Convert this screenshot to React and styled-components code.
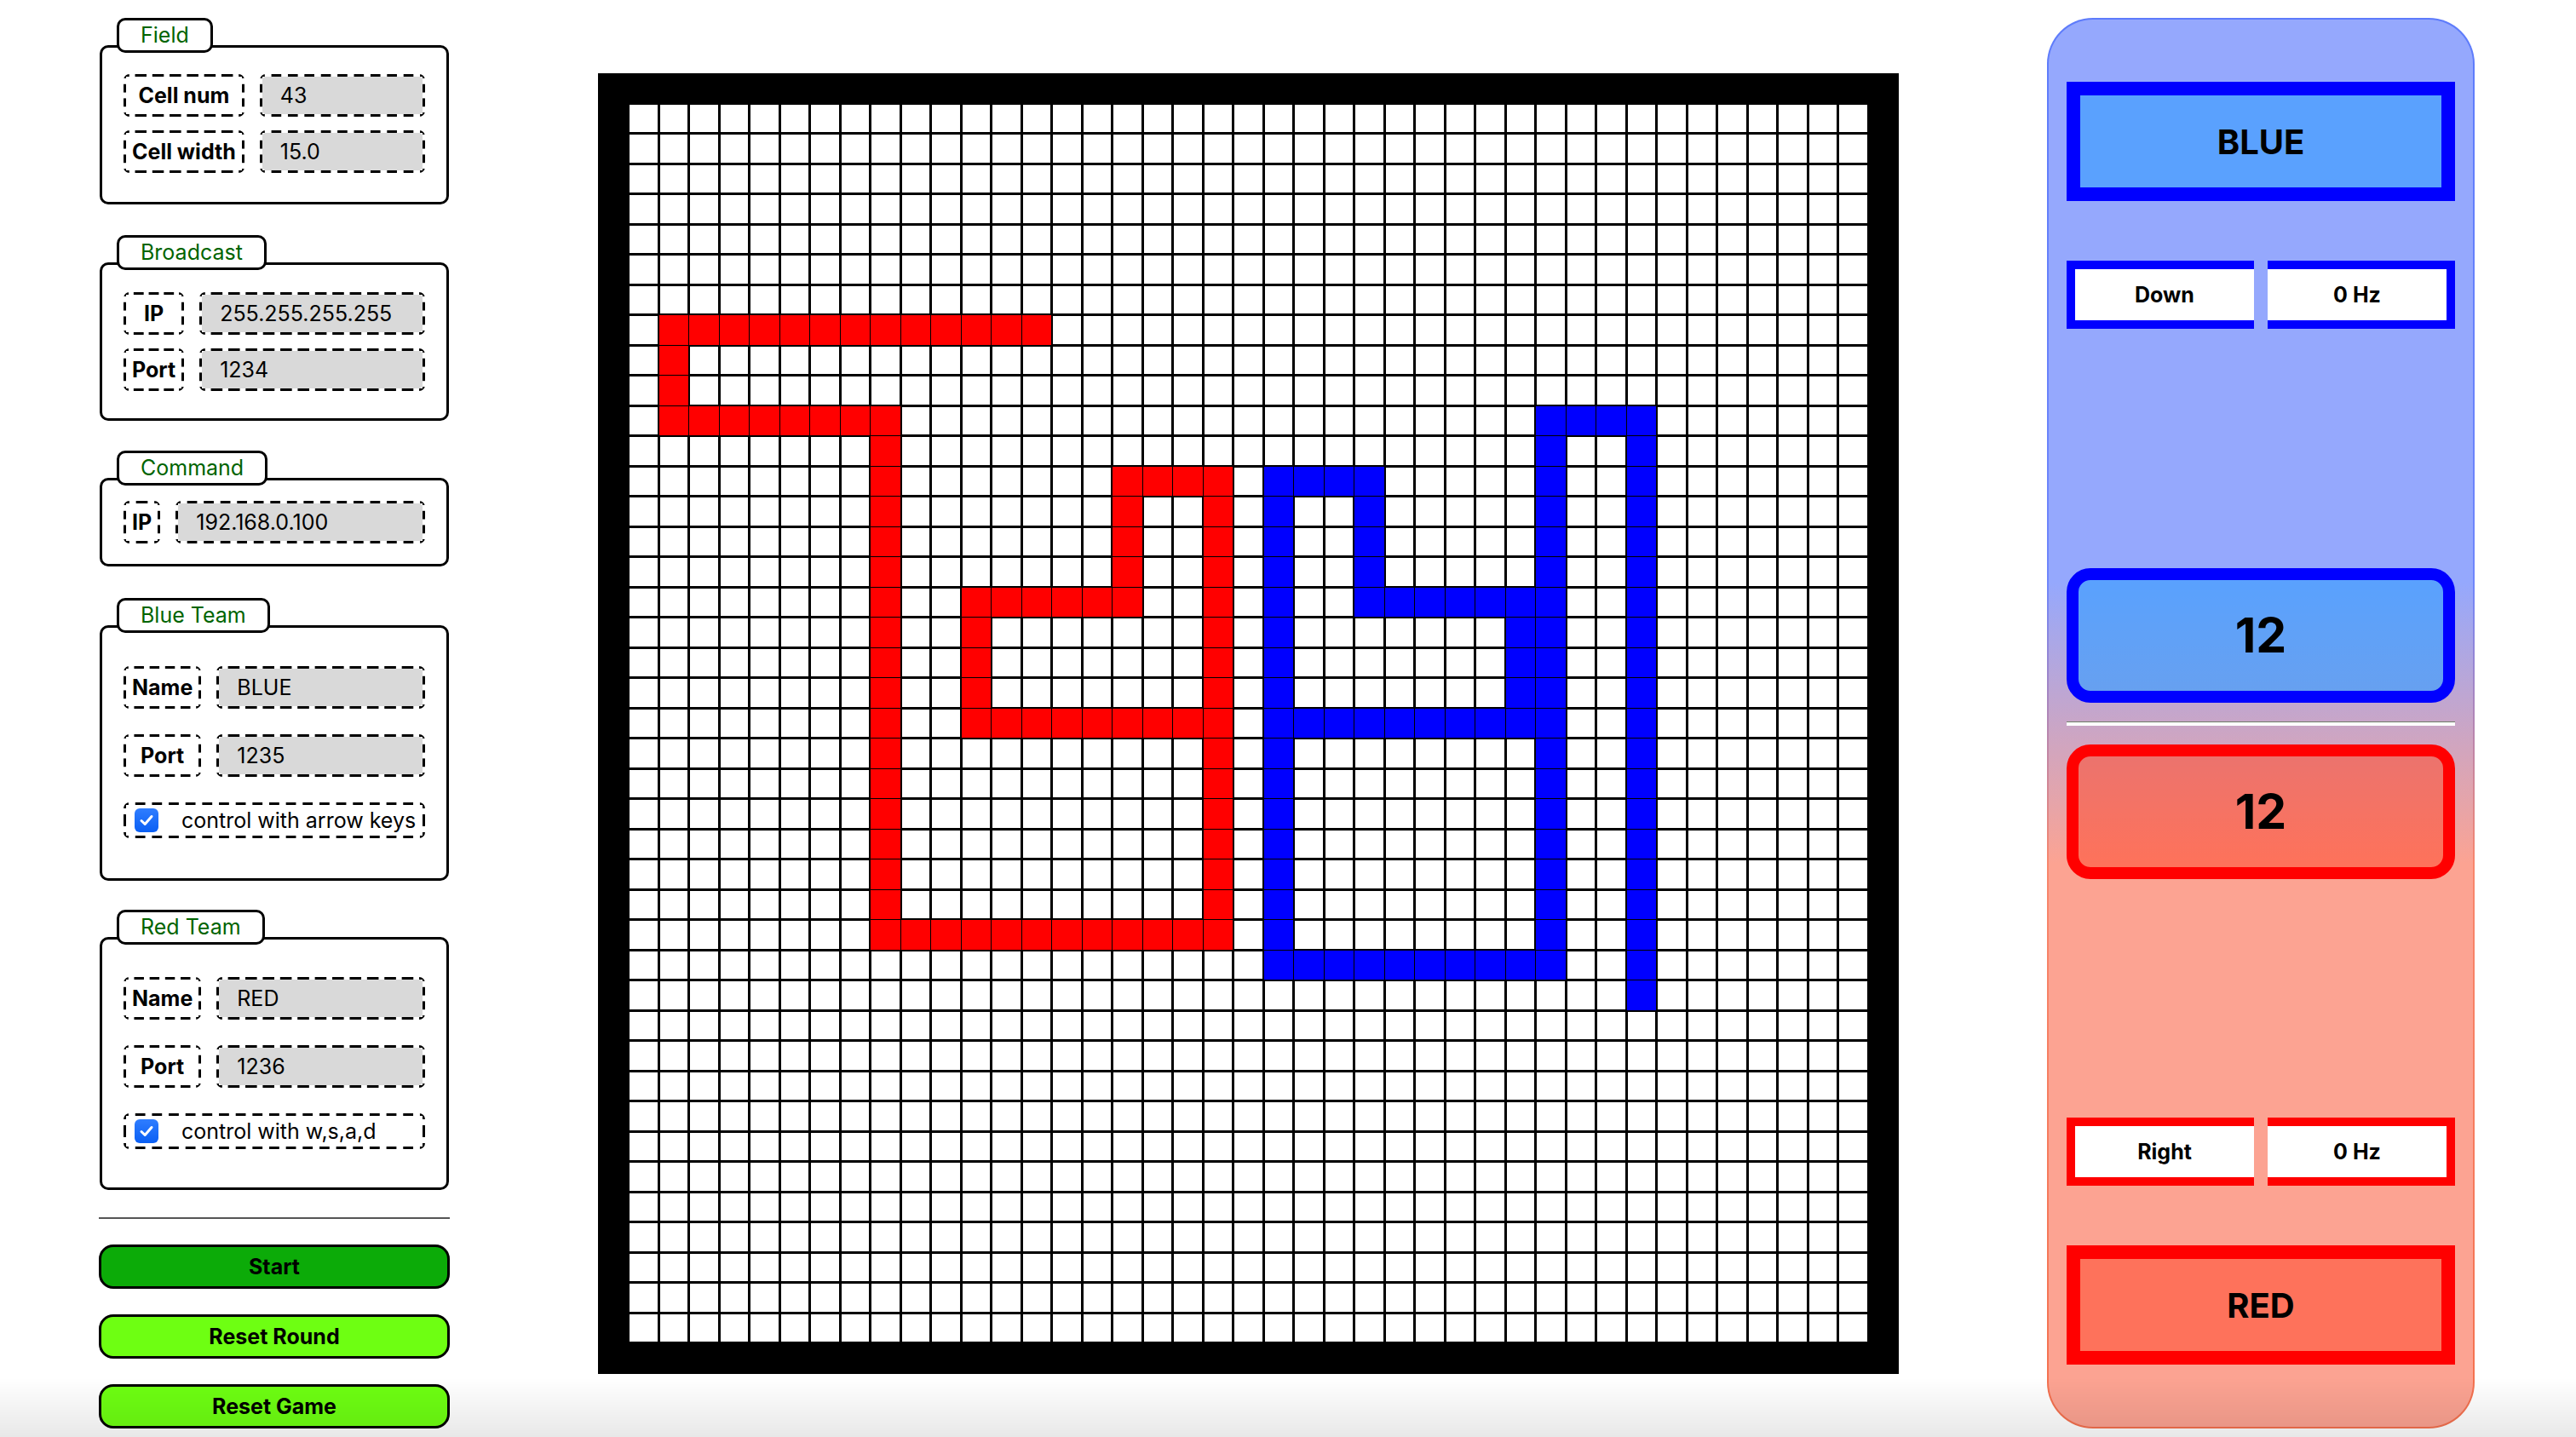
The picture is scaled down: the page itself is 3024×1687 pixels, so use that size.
import React from "react";
import styled, { createGlobalStyle, css } from "styled-components";

const CELL_NUM = 43;

// snake bodies as straight segments: [axis, fixed index, from, to]
const RED_SNAKE = [
  ["row", 8, 2, 14],
  ["col", 2, 8, 11],
  ["row", 11, 2, 9],
  ["col", 9, 11, 28],
  ["row", 28, 9, 20],
  ["col", 20, 13, 28],
  ["row", 13, 17, 20],
  ["col", 17, 13, 17],
  ["row", 17, 12, 17],
  ["col", 12, 17, 21],
  ["row", 21, 12, 20],
];

const BLUE_SNAKE = [
  ["row", 11, 31, 34],
  ["col", 31, 11, 29],
  ["col", 34, 11, 30],
  ["row", 13, 22, 25],
  ["col", 22, 13, 29],
  ["col", 25, 13, 17],
  ["row", 17, 25, 31],
  ["col", 30, 17, 21],
  ["row", 21, 22, 31],
  ["row", 29, 22, 31],
];

function fillSegments(map, segments, kind) {
  segments.forEach(([axis, fixed, from, to]) => {
    for (let i = from; i <= to; i++) {
      const key = axis === "row" ? `${fixed},${i}` : `${i},${fixed}`;
      map[key] = kind;
    }
  });
}

const cellMap = {};
fillSegments(cellMap, RED_SNAKE, "red");
fillSegments(cellMap, BLUE_SNAKE, "blue");

const cells = [];
for (let r = 0; r < CELL_NUM; r++) {
  for (let c = 0; c < CELL_NUM; c++) {
    const wall = r === 0 || c === 0 || r === CELL_NUM - 1 || c === CELL_NUM - 1;
    cells.push({ key: `${r}-${c}`, kind: wall ? "wall" : cellMap[`${r},${c}`] || "empty" });
  }
}

const GlobalStyle = createGlobalStyle`
  * {
    box-sizing: border-box;
  }
  html, body {
    margin: 0;
    padding: 0;
    background: #ffffff;
    overflow: hidden;
  }
  body {
    font-family: Inter, "Liberation Sans", sans-serif;
    color: #000000;
  }
`;

function Section({ title, pad, gap, space, children }) {
  return (
    <SectionWrap $space={space}>
      <Legend>{title}</Legend>
      <SectionBox $pad={pad} $gap={gap}>
        {children}
      </SectionBox>
    </SectionWrap>
  );
}

function InputRow({ label, value }) {
  return (
    <>
      <FieldLabel>{label}</FieldLabel>
      <FieldInput readOnly value={value} />
    </>
  );
}

function CheckRow({ text }) {
  return (
    <CheckLine>
      <CheckBox>
        <svg width="20" height="20" viewBox="0 0 20 20">
          <path d="M4 10.5 L8.2 14.5 L16 5.5" fill="none" stroke="#ffffff" strokeWidth="3" strokeLinecap="round" strokeLinejoin="round" />
        </svg>
      </CheckBox>
      <span>{text}</span>
    </CheckLine>
  );
}

function ControlStats({ team, direction, freq }) {
  return (
    <StatRow>
      <Stat $team={team} $side="left">{direction}</Stat>
      <Stat $team={team} $side="right">{freq}</Stat>
    </StatRow>
  );
}

export default function App() {
  return (
    <Page>
      <GlobalStyle />
      <Sidebar>
        <Section title="Field" pad="31px 25px 34px" gap="16px" space="36px">
          <InputRow label="Cell num" value="43" />
          <InputRow label="Cell width" value="15.0" />
        </Section>
        <Section title="Broadcast" pad="32px 25px 32px" gap="16px" space="35px">
          <InputRow label="IP" value="255.255.255.255" />
          <InputRow label="Port" value="1234" />
        </Section>
        <Section title="Command" pad="24px 25px 24px" gap="0px" space="37px">
          <InputRow label="IP" value="192.168.0.100" />
        </Section>
        <Section title="Blue Team" pad="45px 25px 47px" gap="30px" space="34px">
          <InputRow label="Name" value="BLUE" />
          <InputRow label="Port" value="1235" />
          <CheckRow text="control with arrow keys" />
        </Section>
        <Section title="Red Team" pad="44px 25px 45px" gap="30px" space="32px">
          <InputRow label="Name" value="RED" />
          <InputRow label="Port" value="1236" />
          <CheckRow text="control with w,s,a,d" />
        </Section>
        <Rule />
        <ActionButton $primary>Start</ActionButton>
        <ActionButton>Reset Round</ActionButton>
        <ActionButton>Reset Game</ActionButton>
      </Sidebar>

      <Board>
        {cells.map((cell) => (
          <Cell key={cell.key} $kind={cell.kind} />
        ))}
      </Board>

      <Scoreboard>
        <TeamGroup>
          <NameBox $team="blue">BLUE</NameBox>
          <ControlStats team="blue" direction="Down" freq="0 Hz" />
        </TeamGroup>
        <ScoreGroup>
          <ScoreBox $team="blue">12</ScoreBox>
          <ScoreDivider />
          <ScoreBox $team="red">12</ScoreBox>
        </ScoreGroup>
        <TeamGroup>
          <ControlStats team="red" direction="Right" freq="0 Hz" />
          <NameBox $team="red">RED</NameBox>
        </TeamGroup>
      </Scoreboard>

      <BottomShade />
    </Page>
  );
}

const TEAM = {
  blue: { line: "#0000ff", fill: "rgba(62, 157, 254, 0.68)" },
  red: { line: "#ff0000", fill: "rgba(255, 75, 45, 0.55)" },
};

// long dashes with a half dash at each corner, like the browser draws them
const DASH_H = "linear-gradient(90deg, #000 0 32%, transparent 32% 68%, #000 68%)";
const DASH_V = "linear-gradient(180deg, #000 0 32%, transparent 32% 68%, #000 68%)";

const dashedBox = (fill) => css`
  border: 3px solid transparent;
  border-radius: 7px;
  background:
    ${DASH_H} left top / 20px 3px round no-repeat border-box,
    ${DASH_H} left bottom / 20px 3px round no-repeat border-box,
    ${DASH_V} left top / 3px 20px no-repeat round border-box,
    ${DASH_V} right top / 3px 20px no-repeat round border-box,
    ${fill} padding-box;
`;

const Page = styled.div`
  height: 100vh;
  display: flex;
  align-items: flex-start;
  justify-content: space-between;
  padding: 21px 119px 10px 116px;
`;

const Sidebar = styled.div`
  width: 412px;
  display: flex;
  flex-direction: column;
`;

const SectionWrap = styled.div`
  display: flex;
  flex-direction: column;
  padding: 0 1px;
  margin-bottom: ${(p) => p.$space};
`;

const Legend = styled.div`
  position: relative;
  z-index: 1;
  align-self: flex-start;
  margin: 0 0 -9px 20px;
  height: 41px;
  padding: 0 25px;
  border: 3px solid #000;
  border-radius: 10px;
  background: #fff;
  color: #006400;
  font-size: 25px;
  line-height: 35px;
`;

const SectionBox = styled.div`
  border: 3px solid #000;
  border-radius: 10px;
  padding: ${(p) => p.$pad};
  display: grid;
  grid-template-columns: auto 1fr;
  column-gap: 18px;
  row-gap: ${(p) => p.$gap};
`;

const FieldLabel = styled.div`
  ${dashedBox("#ffffff")}
  height: 50px;
  padding: 0 7px;
  display: flex;
  align-items: center;
  justify-content: center;
  font-size: 25px;
  font-weight: 700;
  white-space: nowrap;
`;

const FieldInput = styled.input`
  ${dashedBox("#d9d9d9")}
  width: 100%;
  min-width: 0;
  height: 50px;
  padding: 0 21px;
  font-family: Inter, "Liberation Sans", sans-serif;
  font-size: 25px;
  color: #000;
  outline: none;
`;

const CheckLine = styled.div`
  ${dashedBox("#ffffff")}
  grid-column: 1 / -1;
  height: 42px;
  padding: 0 10px;
  display: flex;
  align-items: center;
  gap: 27px;
  font-size: 25px;
  white-space: nowrap;
`;

const CheckBox = styled.span`
  flex: none;
  width: 28px;
  height: 28px;
  border-radius: 6px;
  background: linear-gradient(#2f7dff, #0a5ff4);
  display: flex;
  align-items: center;
  justify-content: center;
`;

const Rule = styled.div`
  height: 2px;
  background: #555;
  margin-bottom: 30px;
`;

const ActionButton = styled.button`
  height: 52px;
  margin-bottom: 30px;
  border: 3px solid #000;
  border-radius: 17px;
  background: ${(p) => (p.$primary ? "#0cab08" : "#6eff12")};
  font-family: Inter, "Liberation Sans", sans-serif;
  font-size: 25px;
  font-weight: 700;
  color: #000;
  &:last-child {
    margin-bottom: 0;
  }
`;

const Board = styled.div`
  align-self: center;
  width: 1527px;
  height: 1527px;
  flex: none;
  padding: 1.5px;
  background: #000;
  display: grid;
  grid-template-columns: repeat(${CELL_NUM}, 1fr);
  grid-template-rows: repeat(${CELL_NUM}, 1fr);
  gap: 3px;
`;

const Cell = styled.div`
  background: ${(p) =>
    p.$kind === "wall" ? "#000" : p.$kind === "red" ? "#ff0000" : p.$kind === "blue" ? "#0000ff" : "#fff"};
  box-shadow: ${(p) =>
    p.$kind === "red" ? "0 0 0 1px #ff0000" : p.$kind === "blue" ? "0 0 0 1px #0000ff" : "none"};
`;

const Scoreboard = styled.div`
  width: 502px;
  height: 1656px;
  flex: none;
  padding: 73px 21px;
  border: 2px solid transparent;
  border-radius: 54px;
  background:
    linear-gradient(#95a8fd 0%, #95a8fd 40%, #fca392 60%, #fca392 100%) padding-box,
    linear-gradient(#5d7bfb 0%, #6f86fb 40%, #f8866c 60%, #f4704e 100%) border-box;
  display: flex;
  flex-direction: column;
  justify-content: space-between;
`;

const TeamGroup = styled.div`
  display: flex;
  flex-direction: column;
  gap: 70px;
`;

const NameBox = styled.div`
  height: 140px;
  border: 16px solid ${(p) => TEAM[p.$team].line};
  background: ${(p) => TEAM[p.$team].fill};
  display: flex;
  align-items: center;
  justify-content: center;
  font-size: 40px;
  font-weight: 700;
`;

const StatRow = styled.div`
  display: grid;
  grid-template-columns: 1fr 1fr;
  gap: 16px;
`;

const Stat = styled.div`
  height: 80px;
  background: #fff;
  border: 10px solid ${(p) => TEAM[p.$team].line};
  ${(p) => (p.$side === "left" ? "border-right: none;" : "border-left: none;")}
  display: flex;
  align-items: center;
  justify-content: center;
  font-size: 25px;
  font-weight: 700;
`;

const ScoreGroup = styled.div`
  display: flex;
  flex-direction: column;
  gap: 22px;
`;

const ScoreBox = styled.div`
  height: 158px;
  border: 14px solid ${(p) => TEAM[p.$team].line};
  border-radius: 28px;
  background: ${(p) => TEAM[p.$team].fill};
  display: flex;
  align-items: center;
  justify-content: center;
  font-size: 57px;
  font-weight: 700;
`;

const ScoreDivider = styled.div`
  height: 5px;
  background: #ffffff;
  border-top: 1px solid #6f7d68;
`;

const BottomShade = styled.div`
  position: fixed;
  left: 0;
  right: 0;
  bottom: 0;
  height: 70px;
  pointer-events: none;
  background: linear-gradient(rgba(0, 0, 0, 0), rgba(0, 0, 0, 0.09));
`;
